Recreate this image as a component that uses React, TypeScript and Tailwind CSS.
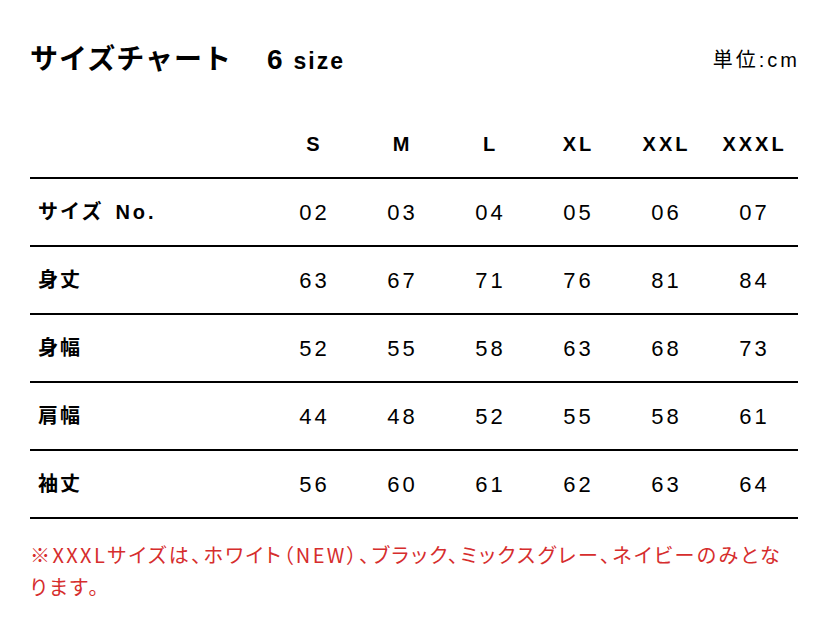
import React from "react";

const sizes = ["S", "M", "L", "XL", "XXL", "XXXL"];
const rows: { label: React.ReactNode; key: string; values: string[] }[] = [
  {
    key: "no",
    label: (
      <>
        サイズ<span className="ml-[12px] tracking-[3px]">No.</span>
      </>
    ),
    values: ["02", "03", "04", "05", "06", "07"],
  },
  { key: "a", label: "身丈", values: ["63", "67", "71", "76", "81", "84"] },
  { key: "b", label: "身幅", values: ["52", "55", "58", "63", "68", "73"] },
  { key: "c", label: "肩幅", values: ["44", "48", "52", "55", "58", "61"] },
  { key: "d", label: "袖丈", values: ["56", "60", "61", "62", "63", "64"] },
];

export default function App() {
  return (
    <div
      className="w-[828px] h-[630px] bg-white text-black px-[30px] pt-[40px]"
      style={{ fontFamily: '"Liberation Sans", "Noto Sans CJK JP", sans-serif' }}
    >
      <div className="flex items-center justify-between h-[40px]">
        <div className="flex items-baseline">
          <span className="text-[28px] font-bold tracking-[1px]">サイズチャート</span>
          <span className="ml-[35px] text-[28px] font-bold">6</span>
          <span className="ml-[11px] text-[23px] font-bold tracking-[2px]">size</span>
        </div>
        <div className="text-[20px] tracking-[3px] mr-[-2px]">単位:cm</div>
      </div>

      <div className="mt-[31px] w-[768px]">
        <div className="flex h-[68px] items-center border-b-2 border-black">
          <div className="w-[239px]" />
          {sizes.map((s) => (
            <div key={s} className="w-[88px] text-center text-[20px] font-bold tracking-[3px] pl-[3px]">
              {s}
            </div>
          ))}
        </div>
        {rows.map((r) => (
          <div key={r.key} className="flex h-[68px] items-center border-b-2 border-black">
            <div className="w-[239px] pl-[8px] text-[20px] font-bold tracking-[2px]">{r.label}</div>
            {r.values.map((v, i) => (
              <div key={i} className="w-[88px] text-center text-[22px] tracking-[3px] pl-[3px]">
                {v}
              </div>
            ))}
          </div>
        ))}
      </div>

      <p
        className="mt-[20px] pr-[8px] text-[20px] leading-[32px] tracking-[2.4px] text-[#d62d2d] [font-feature-settings:'palt']"
        style={{ fontFamily: '"Noto Sans CJK JP", sans-serif' }}
      >
        ※XXXLサイズは、ホワイト（NEW）、ブラック、ミックスグレー、ネイビーのみとなります。
      </p>
    </div>
  );
}
